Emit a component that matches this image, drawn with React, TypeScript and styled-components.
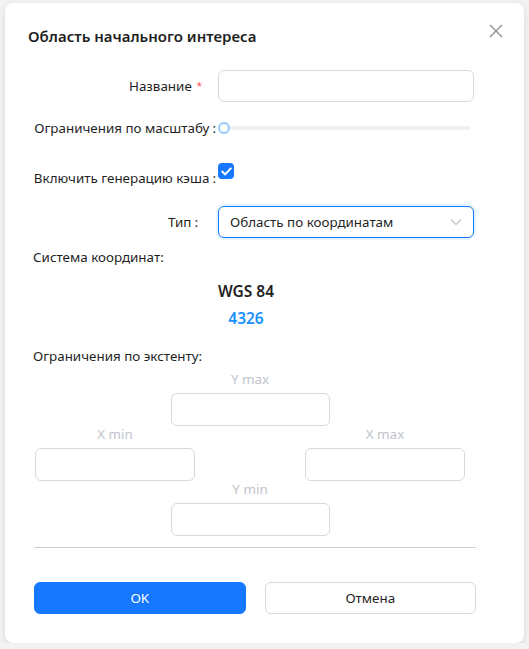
import React from "react";
import styled, { createGlobalStyle } from "styled-components";

const Global = createGlobalStyle`
  html, body { margin: 0; padding: 0; background: #f2f2f2; }
  body { font-family: "Noto Sans", "Open Sans", Arial, sans-serif; color: rgba(0,0,0,0.88); }
  * { box-sizing: border-box; }
`;

const Card = styled.div`
  margin: 3px 0 0 5px;
  width: 519px;
  height: 640px;
  background: #fff;
  border-radius: 8px;
  box-shadow: 0 3px 8px rgba(0,0,0,0.08), 0 1px 3px rgba(0,0,0,0.05);
  padding: 22px 0 0 23px;
  position: relative;
`;

const Title = styled.div`
  font-size: 15px;
  font-weight: 600;
  line-height: 22px;
  height: 22px;
  color: #1f1f1f;
`;

const Close = styled.button`
  position: absolute;
  top: 18px;
  right: 18px;
  width: 20px;
  height: 20px;
  border: none;
  background: transparent;
  padding: 0;
  display: flex;
  align-items: center;
  justify-content: center;
`;

const Content = styled.div`
  width: 447px;
  padding-left: 5px;
`;

const Row = styled.div<{ $top: number }>`
  display: grid;
  grid-template-columns: 185px 256px;
  align-items: center;
  margin-top: ${(p) => p.$top}px;
  height: 32px;
`;

const Label = styled.label<{ $pad?: number }>`
  font-size: 13.4px;
  white-space: nowrap;
  text-align: right;
  padding-right: ${(p) => p.$pad ?? 8}px;
  color: #1f1f1f;
`;

const Colon = styled.span`
  margin-left: 3px;
`;

const Req = styled.span`
  color: #ff4d4f;
  margin-left: 5px;
  font-family: "Liberation Sans", sans-serif;
`;

const Input = styled.input<{ $w?: number }>`
  width: ${(p) => p.$w || 256}px;
  height: ${(p) => (p.$w ? 33 : 32)}px;
  border: 1px solid #d9d9d9;
  border-radius: 6px;
  background: #fff;
  outline: none;
  font: inherit;
  display: block;
`;

const SliderBox = styled.div`
  position: relative;
  height: 32px;
  width: 252px;
  display: flex;
  align-items: center;
`;

const Rail = styled.div`
  margin-left: 6px;
  flex: 1;
  height: 4px;
  border-radius: 2px;
  background: #f0f0f0;
`;

const Handle = styled.div`
  position: absolute;
  left: 0;
  top: 10px;
  width: 12px;
  height: 12px;
  border-radius: 50%;
  background: #fff;
  border: 2px solid #91caff;
`;

const Check = styled.span`
  width: 16px;
  height: 16px;
  border-radius: 4px;
  background: #1677ff;
  display: flex;
  align-items: center;
  justify-content: center;
  align-self: start;
  margin-top: 1px;
`;

const Select = styled.div`
  width: 256px;
  height: 32px;
  border: 1px solid #1677ff;
  border-radius: 6px;
  box-shadow: 0 0 0 2px rgba(5,145,255,0.1);
  display: flex;
  align-items: center;
  justify-content: space-between;
  padding: 0 11px;
  font-size: 13.4px;
  color: #1f1f1f;
`;

const Section = styled.div<{ $top: number }>`
  font-size: 13.4px;
  color: #1f1f1f;
  margin-top: ${(p) => p.$top}px;
  line-height: 20px;
`;

const Crs = styled.div`
  display: flex;
  flex-direction: column;
  align-items: center;
  width: 426px;
  margin-top: 13px;
`;

const CrsName = styled.div`
  font-size: 15.5px;
  font-weight: 600;
  line-height: 22px;
  color: #1f1f1f;
`;

const CrsCode = styled.div`
  font-size: 15.5px;
  font-weight: 600;
  line-height: 22px;
  color: #1890ff;
  margin-top: 5px;
`;

const Extent = styled.div`
  width: 430px;
  margin-left: 2px;
  margin-top: 5px;
  display: flex;
  flex-direction: column;
`;

const ExtentRow = styled.div<{ $split?: boolean }>`
  display: flex;
  justify-content: ${(p) => (p.$split ? "space-between" : "center")};
`;

const Field = styled.div`
  display: flex;
  flex-direction: column;
  align-items: center;
  width: 160px;
`;

const Hint = styled.div`
  font-size: 13.4px;
  color: #c0c4cc;
  line-height: 16px;
  height: 16px;
  margin-bottom: 6px;
`;

const Divider = styled.div`
  width: 442px;
  height: 1px;
  background: #cfcfcf;
  margin: 11px 0 0 1px;
`;

const Footer = styled.div`
  display: flex;
  gap: 19px;
  width: 442px;
  margin: 34px 0 0 1px;
`;

const Btn = styled.button<{ $primary?: boolean }>`
  flex: 1;
  height: 32px;
  border-radius: 6px;
  font-family: inherit;
  font-size: 13.4px;
  border: 1px solid ${(p) => (p.$primary ? "#1677ff" : "#d9d9d9")};
  background: ${(p) => (p.$primary ? "#1677ff" : "#fff")};
  color: ${(p) => (p.$primary ? "#fff" : "#1f1f1f")};
`;

export default function App() {
  return (
    <>
      <Global />
      <Card>
        <Title>Область начального интереса</Title>
        <Close aria-label="close">
          <svg width="14" height="14" viewBox="0 0 14 14">
            <path d="M1 1L13 13M13 1L1 13" stroke="#8c8c8c" strokeWidth="1.3" fill="none" />
          </svg>
        </Close>
        <Content>
          <Row $top={23}>
            <Label $pad={16}>
              Название<Req>*</Req>
            </Label>
            <Input />
          </Row>
          <Row $top={10}>
            <Label $pad={2}>
              Ограничения по масштабу<Colon>:</Colon>
            </Label>
            <SliderBox>
              <Rail />
              <Handle />
            </SliderBox>
          </Row>
          <Row $top={18}>
            <Label $pad={2}>
              Включить генерацию кэша<Colon>:</Colon>
            </Label>
            <Check>
              <svg width="11" height="9" viewBox="0 0 11 9">
                <path d="M1.2 4.6L4.2 7.4L9.8 1.4" stroke="#fff" strokeWidth="2" fill="none" strokeLinecap="round" strokeLinejoin="round" />
              </svg>
            </Check>
          </Row>
          <Row $top={12}>
            <Label $pad={20}>
              Тип<Colon>:</Colon>
            </Label>
            <Select>
              <span>Область по координатам</span>
              <svg width="12" height="8" viewBox="0 0 12 8">
                <path d="M1 1.5L6 6.5L11 1.5" stroke="#bfbfbf" strokeWidth="1.1" fill="none" />
              </svg>
            </Select>
          </Row>
          <Section $top={9}>Система координат:</Section>
          <Crs>
            <CrsName>WGS 84</CrsName>
            <CrsCode>4326</CrsCode>
          </Crs>
          <Section $top={17}>Ограничения по экстенту:</Section>
          <Extent>
            <ExtentRow>
              <Field>
                <Hint>Y max</Hint>
                <Input $w={159} />
              </Field>
            </ExtentRow>
            <ExtentRow $split>
              <Field>
                <Hint>X min</Hint>
                <Input $w={160} />
              </Field>
              <Field>
                <Hint>X max</Hint>
                <Input $w={160} />
              </Field>
            </ExtentRow>
            <ExtentRow>
              <Field>
                <Hint>Y min</Hint>
                <Input $w={159} />
              </Field>
            </ExtentRow>
          </Extent>
          <Divider />
          <Footer>
            <Btn $primary>OK</Btn>
            <Btn>Отмена</Btn>
          </Footer>
        </Content>
      </Card>
    </>
  );
}
